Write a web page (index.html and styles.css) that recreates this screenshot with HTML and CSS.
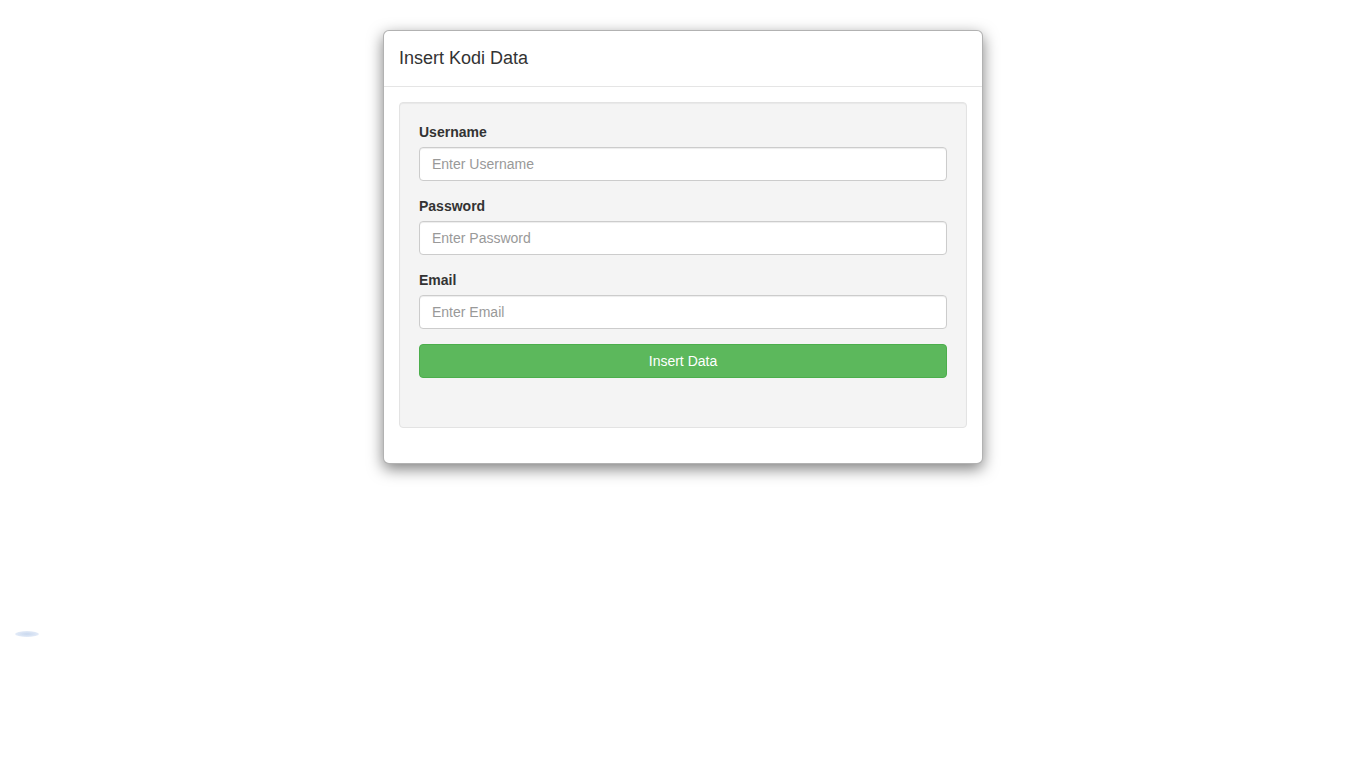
FILE: index.html
```html
<!DOCTYPE html>
<html>
<head>
<meta charset="utf-8">
<link rel="stylesheet" href="styles.css">
</head>
<body>
<div class="dialog">
  <div class="card">
    <div class="card-header">
      <h4 class="card-title">Insert Kodi Data</h4>
    </div>
    <div class="card-body">
      <form class="well">
        <div class="form-group">
          <label>Username</label>
          <input type="text" placeholder="Enter Username">
        </div>
        <div class="form-group">
          <label>Password</label>
          <input type="password" placeholder="Enter Password">
        </div>
        <div class="form-group">
          <label>Email</label>
          <input type="email" placeholder="Enter Email">
        </div>
        <div class="form-group last">
          <button type="button" class="btn">Insert Data</button>
        </div>
      </form>
    </div>
  </div>
</div>
<div class="blob"></div>
</body>
</html>
```
FILE: styles.css
```css
* { box-sizing: border-box; }
html, body { margin: 0; padding: 0; }
body {
  font-family: "Liberation Sans", Arial, sans-serif;
  font-size: 14px;
  line-height: 1.42857143;
  color: #333;
  background: #fff;
  height: 762px;
  position: relative;
}
.dialog {
  width: 600px;
  margin: 30px auto 0;
}
.card {
  background: #fff;
  border: 1px solid rgba(0,0,0,.3);
  border-radius: 6px;
  box-shadow: 0 5px 15px rgba(0,0,0,.5);
  padding-bottom: 20px;
}
.card-header {
  padding: 15px;
  border-bottom: 1px solid #e5e5e5;
}
.card-title {
  margin: 0;
  font-size: 18px;
  font-weight: 400;
  line-height: 25px;
}
.card-body {
  padding: 15px;
}
.well {
  margin: 0;
  background: #f4f4f4;
  border: 1px solid #e3e3e3;
  border-radius: 4px;
  padding: 19px 19px 34px;
  box-shadow: inset 0 1px 1px rgba(0,0,0,.05);
}
.form-group { margin-bottom: 15px; }
.form-group.last { margin-bottom: 15px; }
label {
  display: block;
  font-weight: 700;
  margin-bottom: 5px;
  line-height: 20px;
}
input {
  display: block;
  width: 100%;
  height: 34px;
  padding: 6px 12px;
  font-family: inherit;
  font-size: 14px;
  line-height: 1.42857143;
  color: #555;
  background: #fff;
  border: 1px solid #ccc;
  border-radius: 4px;
  box-shadow: inset 0 1px 1px rgba(0,0,0,.075);
  outline: none;
}
input::placeholder { color: #999; }
.btn {
  display: block;
  width: 100%;
  height: 34px;
  padding: 6px 12px;
  font-family: inherit;
  font-size: 14px;
  line-height: 1.42857143;
  color: #fff;
  background: #5cb85c;
  border: 1px solid #4cae4c;
  border-radius: 4px;
  cursor: pointer;
}
.blob {
  position: absolute;
  left: 15px;
  top: 631px;
  width: 24px;
  height: 6px;
  border-radius: 50%;
  background: radial-gradient(ellipse at center, #c9d8ee 0%, #dfe8f6 60%, rgba(255,255,255,0) 100%);
}
```
